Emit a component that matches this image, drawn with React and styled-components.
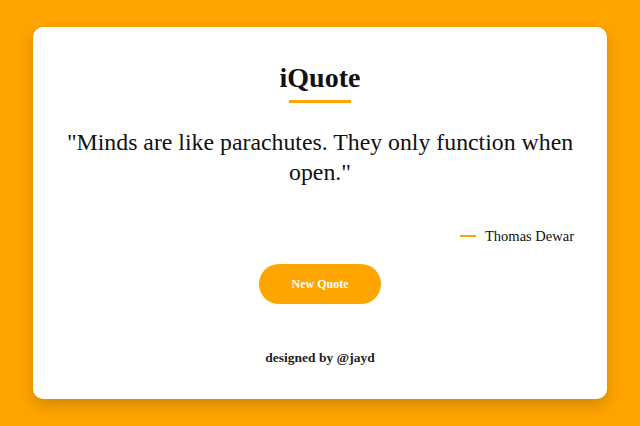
import React from "react";
import styled, { createGlobalStyle } from "styled-components";

const Global = createGlobalStyle`
  html, body { margin: 0; padding: 0; }
  body {
    background: #ffa500;
    font-family: "Liberation Serif", "DejaVu Serif", serif;
    width: 640px;
    height: 426px;
    overflow: hidden;
  }
`;

const Page = styled.div`
  padding: 27px 33px;
`;

const Card = styled.div`
  box-sizing: border-box;
  width: 574px;
  height: 372px;
  background: #fff;
  border-radius: 10px;
  box-shadow: 0 6px 16px rgba(0, 0, 0, 0.18);
  padding: 34px 33px 0;
  display: flex;
  flex-direction: column;
  align-items: center;
  color: #111;
`;

const Title = styled.h1`
  margin: 0;
  font-size: 28px;
  line-height: 34px;
  font-weight: 700;
`;

const Underline = styled.div`
  width: 62px;
  height: 3px;
  background: #ffa500;
  margin-top: 5px;
`;

const Quote = styled.p`
  margin: 24px 0 0;
  font-size: 23.8px;
  line-height: 30px;
  text-align: center;
`;

const Author = styled.div`
  align-self: flex-end;
  margin-top: 39px;
  display: flex;
  align-items: center;
  gap: 9px;
  font-size: 14.5px;
  line-height: 20px;
`;

const Dash = styled.span`
  display: block;
  width: 16px;
  height: 2px;
  background: #ffa500;
`;

const Button = styled.button`
  margin-top: 18px;
  width: 122px;
  height: 40px;
  border: none;
  border-radius: 20px;
  background: #ffa500;
  color: #fff;
  font-family: inherit;
  font-weight: 700;
  font-size: 12px;
  cursor: pointer;
`;

const Footer = styled.div`
  margin-top: 44px;
  font-size: 13.5px;
  line-height: 20px;
  font-weight: 700;
  color: #222;
`;

export default function App() {
  return (
    <Page>
      <Global />
      <Card>
        <Title>iQuote</Title>
        <Underline />
        <Quote>"Minds are like parachutes. They only function when open."</Quote>
        <Author>
          <Dash />
          Thomas Dewar
        </Author>
        <Button>New Quote</Button>
        <Footer>designed by @jayd</Footer>
      </Card>
    </Page>
  );
}
